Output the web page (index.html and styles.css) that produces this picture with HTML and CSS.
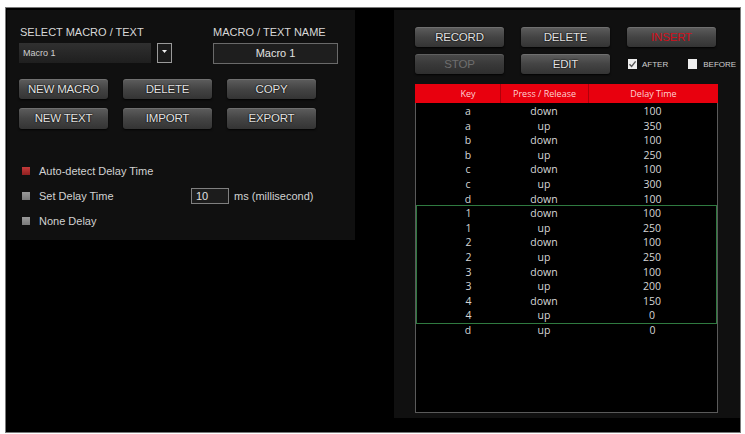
FILE: index.html
```html
<!DOCTYPE html>
<html>
<head>
<meta charset="utf-8">
<link rel="stylesheet" href="styles.css">
</head>
<body>
<div class="frame">
  <section class="left">
    <div class="labels">
      <span class="lbl lbl-select">SELECT MACRO / TEXT</span>
      <span class="lbl">MACRO / TEXT NAME</span>
    </div>
    <div class="inputs">
      <div class="select">Macro 1</div>
      <div class="drop"><svg width="5" height="3" viewBox="0 0 5 3"><path d="M0 0H5L2.5 3Z" fill="#eee"/></svg></div>
      <div class="name">Macro 1</div>
    </div>
    <div class="btnrow first">
      <div class="btn">NEW MACRO</div>
      <div class="btn">DELETE</div>
      <div class="btn">COPY</div>
    </div>
    <div class="btnrow second">
      <div class="btn tall">NEW TEXT</div>
      <div class="btn tall">IMPORT</div>
      <div class="btn tall">EXPORT</div>
    </div>
    <ul class="opts">
      <li><span class="box red"></span>Auto-detect Delay Time</li>
      <li><span class="box"></span><span class="opt-text">Set Delay Time</span><span class="ms-input">10</span><span>ms (millisecond)</span></li>
      <li><span class="box"></span>None Delay</li>
    </ul>
  </section>

  <section class="right">
    <div class="rbtns">
      <div class="btn">RECORD</div>
      <div class="btn">DELETE</div>
      <div class="btn insert">INSERT</div>
    </div>
    <div class="rbtns second">
      <div class="btn stop">STOP</div>
      <div class="btn">EDIT</div>
      <div class="checks">
        <span class="cb"><svg width="9" height="10" viewBox="0 0 9 10"><path d="M1.5 5.2L3.6 7.4L7.6 2.4" fill="none" stroke="#555" stroke-width="1.4"/></svg></span>
        <span class="cb-label">AFTER</span>
        <span class="cb before"></span>
        <span class="cb-label wide">BEFORE</span>
      </div>
    </div>
    <div class="table">
      <div class="thead">
        <span class="c1">Key</span>
        <span class="c2">Press / Release</span>
        <span class="c3">Delay Time</span>
      </div>
      <div class="tbody">
        <div class="row"><span class="c1">a</span><span>down</span><span>100</span></div>
        <div class="row"><span class="c1">a</span><span>up</span><span>350</span></div>
        <div class="row"><span class="c1">b</span><span>down</span><span>100</span></div>
        <div class="row"><span class="c1">b</span><span>up</span><span>250</span></div>
        <div class="row"><span class="c1">c</span><span>down</span><span>100</span></div>
        <div class="row"><span class="c1">c</span><span>up</span><span>300</span></div>
        <div class="row"><span class="c1">d</span><span>down</span><span>100</span></div>
        <div class="group">
          <div class="row"><span class="c1">1</span><span>down</span><span>100</span></div>
          <div class="row"><span class="c1">1</span><span>up</span><span>250</span></div>
          <div class="row"><span class="c1">2</span><span>down</span><span>100</span></div>
          <div class="row"><span class="c1">2</span><span>up</span><span>250</span></div>
          <div class="row"><span class="c1">3</span><span>down</span><span>100</span></div>
          <div class="row"><span class="c1">3</span><span>up</span><span>200</span></div>
          <div class="row"><span class="c1">4</span><span>down</span><span>150</span></div>
          <div class="row"><span class="c1">4</span><span>up</span><span>0</span></div>
        </div>
        <div class="row"><span class="c1">d</span><span>up</span><span>0</span></div>
      </div>
    </div>
  </section>
</div>
</body>
</html>
```

FILE: styles.css
```css
body {
  margin: 0;
  background: #fff;
  font-family: "Liberation Sans", Arial, sans-serif;
}

.frame {
  box-sizing: border-box;
  width: 736px;
  height: 426px;
  margin: 7px 0 0 5px;
  background: #000;
  border: 1px solid #7a7a7a;
  padding: 2px 0 0 1px;
  display: flex;
  align-items: flex-start;
}

/* ---------- left panel ---------- */
.left {
  box-sizing: border-box;
  width: 348px;
  height: 230px;
  background: #101010;
  padding: 16px 0 0 12px;
}

.labels {
  display: flex;
  height: 12px;
  line-height: 12px;
  font-size: 11px;
  color: #d8d8d8;
  white-space: nowrap;
}

.lbl-select {
  width: 193px;
  margin-left: 1px;
}

.inputs {
  display: flex;
  align-items: flex-start;
  margin-top: 5px;
  height: 21px;
}

.select {
  box-sizing: border-box;
  width: 132px;
  height: 20px;
  padding-left: 4px;
  background: linear-gradient(#303030, #1f1f1f);
  font-size: 9px;
  line-height: 20px;
  color: #cfcfcf;
}

.drop {
  box-sizing: border-box;
  width: 15px;
  height: 20px;
  margin-left: 6px;
  border: 1px solid #9a9a9a;
  background: #1a1a1a;
  display: flex;
  justify-content: center;
  padding-top: 6px;
}

.drop svg {
  display: block;
}

.name {
  box-sizing: border-box;
  width: 125px;
  height: 21px;
  margin-left: 41px;
  border: 1px solid #6a6a6a;
  background: #1e1e1e;
  text-align: center;
  font-size: 11px;
  line-height: 19px;
  color: #e2e2e2;
}

.btnrow {
  display: flex;
  gap: 15px;
}

.btnrow.first {
  margin-top: 15px;
}

.btnrow.second {
  margin-top: 9px;
}

.btn {
  box-sizing: border-box;
  width: 89px;
  height: 20px;
  border-radius: 3px;
  background: linear-gradient(#5e5e5e, #444 50%, #343434);
  box-shadow: inset 0 1px 0 rgba(255, 255, 255, 0.12), 0 1px 2px rgba(0, 0, 0, 0.9);
  color: #e4e4e4;
  font-size: 11.5px;
  line-height: 20px;
  text-align: center;
  letter-spacing: -0.2px;
  text-shadow: 0 0 2px #000, 0 0 1px #000;
  white-space: nowrap;
}

.btn.tall {
  height: 21px;
  line-height: 21px;
}

.opts {
  list-style: none;
  margin: 29px 0 0;
  padding: 0;
}

.opts li {
  display: flex;
  align-items: center;
  height: 25px;
  font-size: 11px;
  color: #d2d2d2;
  white-space: nowrap;
}

.box {
  width: 8px;
  height: 8px;
  margin: 0 9px 0 3px;
  background: linear-gradient(#9a9a9a, #7a7a7a);
}

.box.red {
  background: linear-gradient(#c43a3a, #8e2020);
}

.opt-text {
  width: 152px;
}

.ms-input {
  box-sizing: border-box;
  width: 38px;
  height: 16px;
  margin-right: 5px;
  padding-left: 4px;
  border: 1px solid #808080;
  background: #1c1c1c;
  line-height: 14px;
  color: #e0e0e0;
}

/* ---------- right panel ---------- */
.right {
  box-sizing: border-box;
  width: 346px;
  height: 408px;
  margin-left: 39px;
  background: #101010;
  padding: 17px 0 0 21px;
}

.rbtns {
  display: flex;
  gap: 17px;
}

.rbtns.second {
  margin-top: 7px;
}

.btn.insert {
  color: #d0101c;
  text-shadow: none;
}

.btn.stop {
  background: linear-gradient(#4a4a4a, #393939 50%, #2e2e2e);
  color: #6e6e6e;
  text-shadow: none;
}

.checks {
  display: flex;
  align-items: center;
  margin-left: 1px;
}

.cb {
  display: block;
  width: 9px;
  height: 10px;
  background: #eeeeee;
}

.cb svg {
  display: block;
}

.cb.before {
  margin-left: 20px;
}

.cb-label {
  margin-left: 5px;
  font-size: 8px;
  color: #cfcfcf;
}

.cb-label.wide {
  margin-left: 6px;
}

.table {
  box-sizing: border-box;
  width: 303px;
  height: 329px;
  margin-top: 10px;
  border: 1px solid #5a5a5a;
  border-top: 0;
  background: #000;
  font-family: "Open Sans", "DejaVu Sans", sans-serif;
}

.thead {
  display: grid;
  grid-template-columns: 85px 88px 1fr;
  margin: 0 -1px;
  height: 19px;
  background: #e8000e;
  font-size: 9px;
  line-height: 19px;
  color: #ffd2d2;
  text-align: center;
}

.thead .c1 {
  padding-left: 21px;
}

.thead .c2,
.thead .c3 {
  border-left: 1px solid #b0000a;
}

.tbody {
  padding-top: 1px;
}

.row {
  display: grid;
  grid-template-columns: 84px 88px 1fr;
  height: 14.6px;
  line-height: 14.6px;
  font-size: 10.5px;
  color: #d6d6d6;
  text-align: center;
}

.row .c1 {
  padding-left: 20px;
}

.group {
  margin: 0 1px;
  outline: 1px solid #2f7a40;
}

.group .row {
  grid-template-columns: 83px 88px 1fr;
}
```
